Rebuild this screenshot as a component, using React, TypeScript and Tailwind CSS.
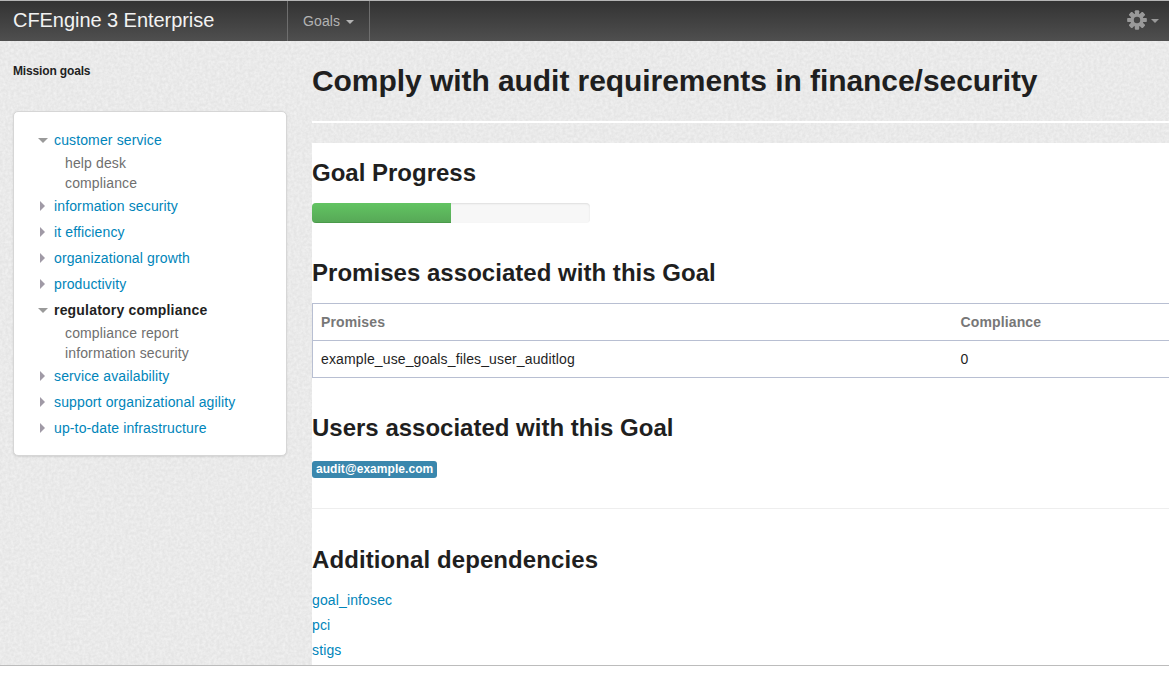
import React from "react";

function Tri({ open }: { open: boolean }) {
  return open ? (
    <span className="w-0 h-0 border-l-[5px] border-r-[5px] border-t-[5px] border-l-transparent border-r-transparent border-t-[#9a9a9a] mr-[6px] ml-[-1px]" />
  ) : (
    <span className="w-0 h-0 border-t-[5px] border-b-[5px] border-l-[5px] border-t-transparent border-b-transparent border-l-[#a09aa6] ml-[1px] mr-[9px]" />
  );
}

function Item({ label, open = false, active = false, subs = [] }: { label: string; open?: boolean; active?: boolean; subs?: string[] }) {
  return (
    <li>
      <div className="h-[26px] flex items-center">
        <Tri open={open} />
        <a className={active ? "font-bold text-[#1f1f1f] tracking-[0.19px]" : "text-[#0085ba]"}>{label}</a>
      </div>
      {subs.length > 0 && (
        <ul className="pl-[26px]">
          {subs.map((s) => (
            <li key={s} className="h-[20px] leading-[20px] text-[#6f6f6f]">{s}</li>
          ))}
        </ul>
      )}
    </li>
  );
}

function Gear() {
  return (
    <svg width="20" height="20" viewBox="0 0 20 20" className="text-[#999]">
      <g fill="currentColor">
        {[0, 45, 90, 135, 180, 225, 270, 315].map((a) => (
          <rect key={a} x="7.9" y="0.4" width="4.2" height="19.2" rx="0.8" transform={`rotate(${a} 10 10)`} />
        ))}
      </g>
      <circle cx="10" cy="10" r="6.6" fill="currentColor" />
      <circle cx="10" cy="10" r="3.2" fill="#444" />
    </svg>
  );
}

const h2 = "text-[24px] leading-[30px] font-bold text-[#1f1f1f]";

export default function App() {
  return (
    <div className="w-[1169px] h-[680px] overflow-hidden bg-white text-[14px] tracking-[0.13px] text-[#1f1f1f] font-['Liberation_Sans',Arial,sans-serif]">
      <header className="h-[41px] flex items-stretch border-t border-[#b5b5b5] bg-gradient-to-b from-[#333333] to-[#4f4f4f]">
        <div className="w-[287px] pl-[13px] text-[20px] leading-[38px] tracking-[-0.05px] text-[#f2f2f2]">CFEngine 3 Enterprise</div>
        <div className="w-[83px] flex items-center pl-[15px] gap-[6px] border-l border-r border-[#6e6e6e] text-[#b3b3b3] pt-[1px]">
          Goals
          <span className="w-0 h-0 border-l-[4px] border-r-[4px] border-t-[4px] border-l-transparent border-r-transparent border-t-[#b3b3b3]" />
        </div>
        <div className="flex-1 flex items-center justify-end pr-[10px] gap-[4px] pb-[3px]">
          <Gear />
          <span className="w-0 h-0 border-l-[4px] border-r-[4px] border-t-[4px] border-l-transparent border-r-transparent border-t-[#999] mt-[3px]" />
        </div>
      </header>

      <div className="relative h-[625px] flex border-b border-[#bcbcbc] bg-[#e5e5e5]">
        <svg className="absolute inset-0 w-full h-full" aria-hidden="true">
          <filter id="grain">
            <feTurbulence type="fractalNoise" baseFrequency="0.35" numOctaves="2" seed="4" />
            <feColorMatrix type="matrix" values="0 0 0 0 1  0 0 0 0 1  0 0 0 0 1  0.8 0 0 0 -0.22" />
          </filter>
          <rect width="100%" height="100%" filter="url(#grain)" />
        </svg>
        <aside className="relative w-[312px] shrink-0 pl-[13px] pr-[25px]">
          <div className="pt-[23px] text-[12px] leading-[14px] font-bold tracking-[-0.15px]">Mission goals</div>
          <nav className="mt-[33px] h-[345px] bg-white border border-[#d6d6d6] rounded-[5px] shadow-[0_1px_2px_rgba(0,0,0,0.1)] pl-[25px] pt-[15px]">
            <ul>
              <Item label="customer service" open subs={["help desk", "compliance"]} />
              <Item label="information security" />
              <Item label="it efficiency" />
              <Item label="organizational growth" />
              <Item label="productivity" />
              <Item label="regulatory compliance" open active subs={["compliance report", "information security"]} />
              <Item label="service availability" />
              <Item label="support organizational agility" />
              <Item label="up-to-date infrastructure" />
            </ul>
          </nav>
        </aside>

        <main className="relative flex-1 min-w-0 overflow-hidden">
          <div className="h-[102px] flex flex-col">
            <h1 className="pt-[20px] text-[30px] leading-[40px] font-bold tracking-[-0.06px]">Comply with audit requirements in finance/security</h1>
            <div className="mt-[20px] h-[2px] bg-white" />
          </div>
          <div className="h-[522px] bg-white overflow-hidden pt-[15px]">
            <h2 className={`${h2} tracking-[0px]`}>Goal Progress</h2>
            <div className="mt-[15px] w-[278px] h-[20px] rounded-[4px] bg-[#f7f7f7] shadow-[inset_0_1px_2px_rgba(0,0,0,0.1)] overflow-hidden">
              <div className="h-full w-[139px] bg-gradient-to-b from-[#62c462] to-[#57a957] border-b border-[#4a9a4a]" />
            </div>
            <h2 className={`${h2} mt-[35px] tracking-[0.03px]`}>Promises associated with this Goal</h2>
            <table className="mt-[15px] w-[900px] border-collapse border border-[#b8bfd2]">
              <tbody>
                <tr className="h-[37px] border-b border-[#b8bfd2]">
                  <th className="w-[640px] pl-[8px] text-left font-bold text-[#777]">Promises</th>
                  <th className="pl-[8px] text-left font-bold text-[#777]">Compliance</th>
                </tr>
                <tr className="h-[37px]">
                  <td className="pl-[8px]">example_use_goals_files_user_auditlog</td>
                  <td className="pl-[8px]">0</td>
                </tr>
              </tbody>
            </table>
            <h2 className={`${h2} mt-[35px] tracking-[0px]`}>Users associated with this Goal</h2>
            <div className="mt-[18px]">
              <span className="block w-fit h-[17px] px-[4px] rounded-[3px] bg-[#3a87ad] text-white text-[12px] leading-[16px] font-bold tracking-[0.05px]">audit@example.com</span>
            </div>
            <div className="mt-[30px] h-px bg-[#eeeeee]" />
            <h2 className={`${h2} mt-[36px] tracking-[0.09px]`}>Additional dependencies</h2>
            <ul className="mt-[13px] text-[#0085ba]">
              <li className="h-[25px] leading-[25px]">goal_infosec</li>
              <li className="h-[25px] leading-[25px]">pci</li>
              <li className="h-[25px] leading-[25px]">stigs</li>
            </ul>
          </div>
        </main>
      </div>
    </div>
  );
}
